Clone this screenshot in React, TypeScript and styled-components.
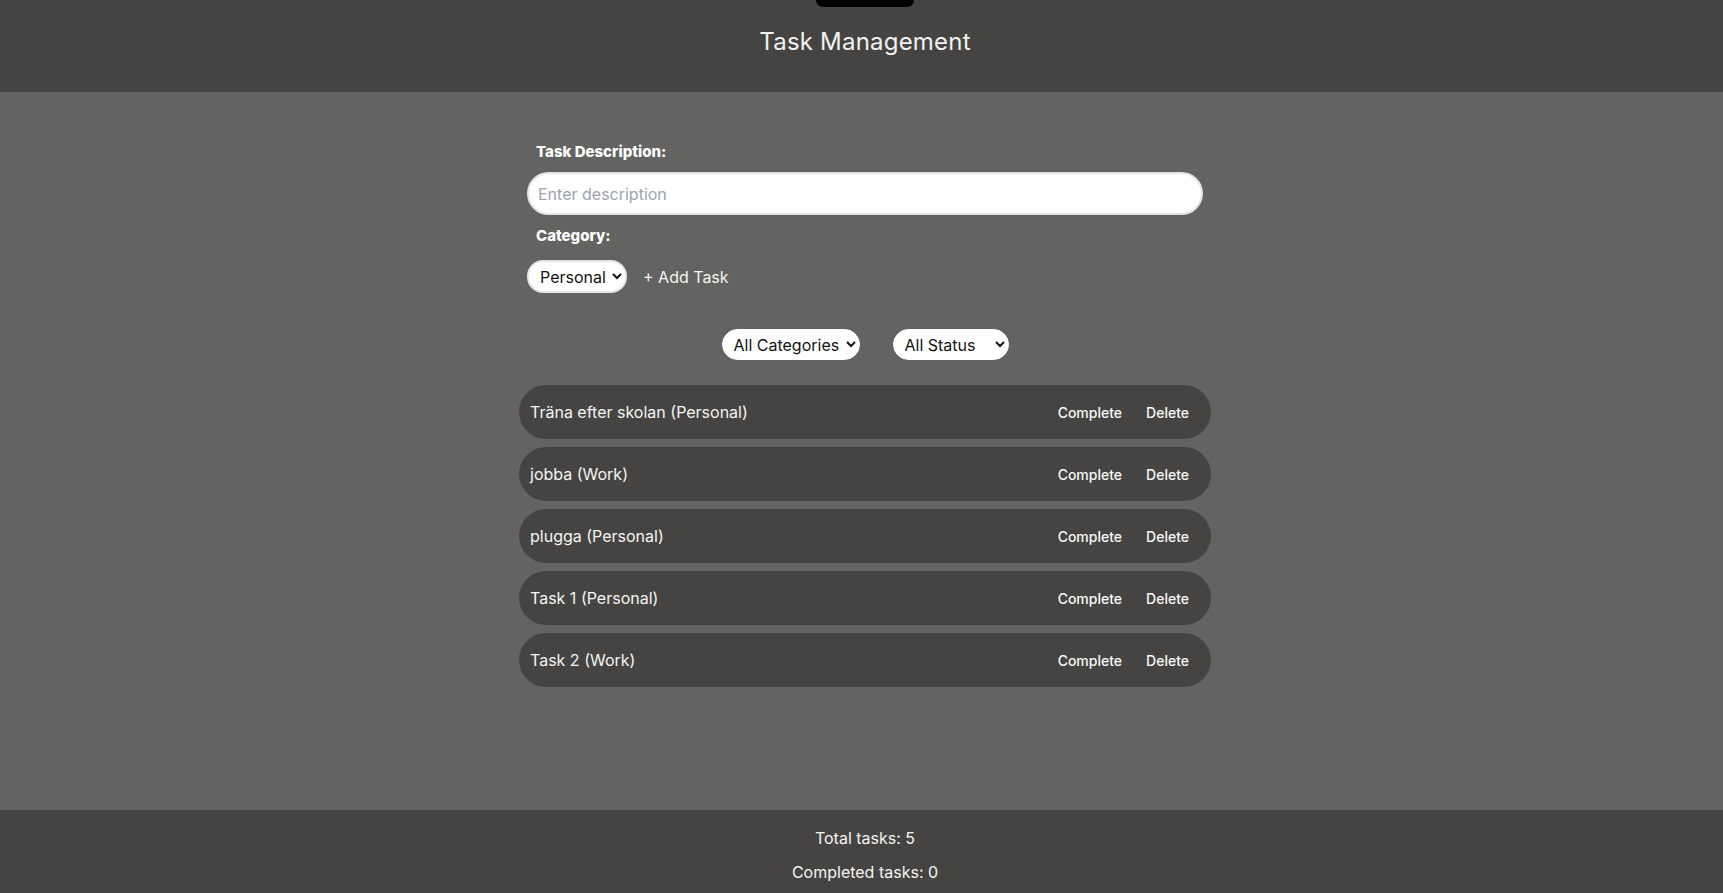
import React, { useState } from "react";
import styled, { createGlobalStyle } from "styled-components";

const GlobalStyle = createGlobalStyle`
  html, body {
    margin: 0;
    padding: 0;
    background: #636361;
  }
  body {
    font-family: Inter, "Open Sans", "Liberation Sans", sans-serif;
    color: #f4f4f2;
  }
  * { box-sizing: border-box; }
`;

const Page = styled.div`
  display: flex;
  flex-direction: column;
`;

const Header = styled.header`
  height: 92px;
  background: #454442;
  display: flex;
  flex-direction: column;
  align-items: center;
  padding-left: 7px;
`;

const Notch = styled.div`
  width: 98px;
  height: 7px;
  background: #000;
  border-radius: 0 0 8px 8px;
`;

const Title = styled.h1`
  margin: 20px 0 0;
  font-size: 24px;
  line-height: 29px;
  font-weight: 400;
  letter-spacing: 0.2px;
  color: #f2f2f0;
`;

const Main = styled.main`
  min-height: 718px;
  background: #636361;
  padding: 51px 0 0 7px;
  display: flex;
  flex-direction: column;
  align-items: center;
`;

const Form = styled.form`
  width: 676px;
  display: flex;
  flex-direction: column;
  align-items: flex-start;
`;

const Label = styled.label<{ $gap: number }>`
  font-size: 15px;
  line-height: 18px;
  font-weight: 800;
  color: #ffffff;
  padding-left: 9px;
  margin-bottom: ${(p) => p.$gap}px;
`;

const TextInput = styled.input`
  width: 100%;
  height: 43px;
  border-radius: 22px;
  border: 2px solid #e3e4e8;
  background: #fff;
  padding: 0 9px;
  font-family: inherit;
  font-size: 16px;
  color: #222;
  margin-bottom: 12px;
  outline: none;
  &::placeholder {
    color: #9ca3af;
  }
`;

const AddRow = styled.div`
  display: flex;
  align-items: center;
  gap: 16px;
`;

const Select = styled.select<{ $h: number; $border?: boolean }>`
  height: ${(p) => p.$h}px;
  border-radius: 16px;
  border: ${(p) => (p.$border ? "2px solid #e3e4e8" : "1px solid #ffffff")};
  background: #fff;
  color: #111;
  font-family: inherit;
  font-size: 16px;
  padding: 0 3px 0 7px;
  outline: none;
`;

const AddButton = styled.button`
  background: none;
  border: none;
  padding: 0;
  color: #f4f4f2;
  font-family: inherit;
  font-size: 16px;
  cursor: pointer;
`;

const Filters = styled.div`
  display: flex;
  justify-content: center;
  gap: 33px;
  margin-top: 36px;
`;

const TaskList = styled.ul`
  list-style: none;
  margin: 25px 0 0;
  padding: 0;
  width: 692px;
  display: flex;
  flex-direction: column;
  gap: 8px;
`;

const TaskRow = styled.li`
  height: 54px;
  border-radius: 27px;
  background: #454442;
  display: flex;
  align-items: center;
  padding: 0 10px 0 11px;
`;

const TaskText = styled.span`
  flex: 1;
  font-size: 16px;
  color: #f4f4f2;
`;

const RowButton = styled.button`
  background: none;
  border: none;
  padding: 0 12px;
  color: #f8f8f6;
  font-family: inherit;
  font-size: 14px;
  font-weight: 500;
  cursor: pointer;
`;

const Footer = styled.footer`
  background: #454442;
  padding: 19px 0 16px 7px;
  display: flex;
  flex-direction: column;
  align-items: center;
  gap: 15px;
`;

const Stat = styled.p`
  margin: 0;
  font-size: 16px;
  line-height: 19px;
  color: #f4f4f2;
`;

type Task = { id: number; text: string; category: string; done: boolean };

const initialTasks: Task[] = [
  { id: 1, text: "Träna efter skolan", category: "Personal", done: false },
  { id: 2, text: "jobba", category: "Work", done: false },
  { id: 3, text: "plugga", category: "Personal", done: false },
  { id: 4, text: "Task 1", category: "Personal", done: false },
  { id: 5, text: "Task 2", category: "Work", done: false },
];

export default function App() {
  const [tasks, setTasks] = useState<Task[]>(initialTasks);
  const [desc, setDesc] = useState("");
  const [cat, setCat] = useState("Personal");

  const add = (e: React.FormEvent) => {
    e.preventDefault();
    if (!desc.trim()) return;
    setTasks([...tasks, { id: Date.now(), text: desc, category: cat, done: false }]);
    setDesc("");
  };

  return (
    <Page>
      <GlobalStyle />
      <Header>
        <Notch />
        <Title>Task Management</Title>
      </Header>
      <Main>
        <Form onSubmit={add}>
          <Label $gap={11} htmlFor="desc">Task Description:</Label>
          <TextInput
            id="desc"
            placeholder="Enter description"
            value={desc}
            onChange={(e) => setDesc(e.target.value)}
          />
          <Label $gap={15} htmlFor="cat">Category:</Label>
          <AddRow>
            <Select id="cat" $h={33} $border value={cat} onChange={(e) => setCat(e.target.value)}>
              <option>Personal</option>
              <option>Work</option>
            </Select>
            <AddButton type="submit">+ Add Task</AddButton>
          </AddRow>
        </Form>
        <Filters>
          <Select $h={31} defaultValue="all">
            <option value="all">All Categories</option>
            <option>Personal</option>
            <option>Work</option>
          </Select>
          <Select $h={31} defaultValue="all">
            <option value="all">All Status</option>
            <option>Completed</option>
            <option>Incomplete</option>
          </Select>
        </Filters>
        <TaskList>
          {tasks.map((t) => (
            <TaskRow key={t.id}>
              <TaskText>
                {t.text} ({t.category})
              </TaskText>
              <RowButton
                onClick={() =>
                  setTasks(tasks.map((x) => (x.id === t.id ? { ...x, done: !x.done } : x)))
                }
              >
                Complete
              </RowButton>
              <RowButton onClick={() => setTasks(tasks.filter((x) => x.id !== t.id))}>
                Delete
              </RowButton>
            </TaskRow>
          ))}
        </TaskList>
      </Main>
      <Footer>
        <Stat>Total tasks: {tasks.length}</Stat>
        <Stat>Completed tasks: {tasks.filter((t) => t.done).length}</Stat>
      </Footer>
    </Page>
  );
}
